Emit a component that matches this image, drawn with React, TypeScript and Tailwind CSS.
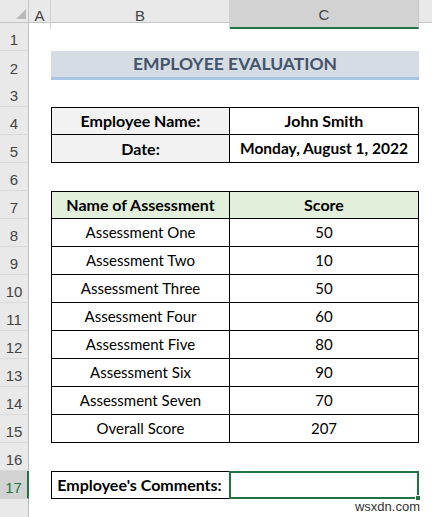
const ROW_H = "h-[28px]";

const assessments: [string, string][] = [
  ["Assessment One", "50"],
  ["Assessment Two", "10"],
  ["Assessment Three", "50"],
  ["Assessment Four", "60"],
  ["Assessment Five", "80"],
  ["Assessment Six", "90"],
  ["Assessment Seven", "70"],
  ["Overall Score", "207"],
];

function RowHead({ n, selected }: { n?: number; selected?: boolean }) {
  return (
    <div
      className={
        selected
          ? "flex items-end justify-center border-b border-r-2 border-b-[#d4d4d4] border-r-[#217346] bg-[#d2d2d2] pb-[3px] text-[#217346]"
          : "flex items-end justify-center border-b border-r border-b-[#d9d9d9] border-r-[#bdbdbd] bg-[#e9e9e9] pb-[3px] text-[#444]"
      }
      style={{ fontFamily: "'Liberation Sans', Arial, sans-serif" }}
    >
      <span className="text-[15px] leading-none">{n}</span>
    </div>
  );
}

function Row({
  n,
  selected,
  children,
}: {
  n?: number;
  selected?: boolean;
  children?: React.ReactNode;
}) {
  return (
    <div className={`grid grid-cols-[29px_22px_179px_189px_1fr] ${ROW_H}`}>
      <RowHead n={n} selected={selected} />
      <div />
      {children ?? (
        <>
          <div />
          <div />
        </>
      )}
      <div />
    </div>
  );
}

export default function App() {
  return (
    <div
      className="h-[517px] w-[432px] overflow-hidden bg-white text-black"
      style={{ fontFamily: "Lato, 'Open Sans', sans-serif" }}
    >
      {/* column headers */}
      <div
        className="grid h-[23px] grid-cols-[29px_22px_179px_189px_1fr] border-b border-[#c6c6c6] bg-[#e9e9e9] text-[15px] text-[#444]"
        style={{ fontFamily: "'Liberation Sans', Arial, sans-serif" }}
      >
        <div className="relative border-r border-[#c6c6c6]">
          <svg className="absolute left-[16px] top-[9px]" width="10" height="10" viewBox="0 0 10 10">
            <polygon points="10,0 10,10 0,10" fill="#b9b9b9" />
          </svg>
        </div>
        <div className="flex items-center justify-center border-r border-[#d0d0d0] pt-[4px]">A</div>
        <div className="flex items-center justify-center border-r border-[#d0d0d0] pt-[4px]">B</div>
        <div className="flex items-center justify-center border-b-2 border-r border-b-[#217346] border-r-[#c6c6c6] bg-[#d2d2d2] pt-[4px]">
          C
        </div>
        <div />
      </div>

      <Row n={1} />
      <Row n={2}>
        <div className="col-span-2 flex items-center justify-center border-b-[3px] border-[#a9c5e4] bg-[#d6dce4] text-[17.5px] font-bold text-[#44546a]">
          EMPLOYEE EVALUATION
        </div>
      </Row>
      <Row n={3} />
      <Row n={4}>
        <div className="flex items-center justify-center border border-black bg-[#f2f2f2] text-[16px] font-bold">
          Employee Name:
        </div>
        <div className="flex items-center justify-center border-y border-r border-black text-[16px] font-bold">
          John Smith
        </div>
      </Row>
      <Row n={5}>
        <div className="flex items-center justify-center border-x border-b border-black bg-[#f2f2f2] text-[16px] font-bold">
          Date:
        </div>
        <div className="flex items-center justify-center border-b border-r border-black text-[15.5px] font-bold">
          Monday, August 1, 2022
        </div>
      </Row>
      <Row n={6} />
      <Row n={7}>
        <div className="flex items-center justify-center border border-black bg-[#e2efda] text-[16px] font-bold">
          Name of Assessment
        </div>
        <div className="flex items-center justify-center border-y border-r border-black bg-[#e2efda] text-[16px] font-bold">
          Score
        </div>
      </Row>
      {assessments.map(([name, score], i) => (
        <Row key={name} n={8 + i}>
          <div className="flex items-center justify-center border-x border-b border-black text-[15px]">{name}</div>
          <div className="flex items-center justify-center border-b border-r border-black text-[15px]">{score}</div>
        </Row>
      ))}
      <Row n={16} />
      <Row n={17} selected>
        <div className="flex items-center justify-center border border-black pr-[2px] text-[16px] font-bold">
          Employee's Comments:
        </div>
        <div className="relative -ml-px border-2 border-[#217346]">
          <span className="absolute -bottom-[4px] -right-[4px] h-[6px] w-[6px] border border-white bg-[#217346]" />
        </div>
      </Row>
      <div className="grid h-[19px] grid-cols-[29px_1fr]">
        <div className="border-r border-[#bdbdbd] bg-[#e9e9e9]" />
        <div
          className="flex justify-end pr-[12px] pt-[1px] text-[13px] leading-none text-[#333]"
          style={{ fontFamily: "'Liberation Sans', Arial, sans-serif" }}
        >
          wsxdn.com
        </div>
      </div>
    </div>
  );
}
